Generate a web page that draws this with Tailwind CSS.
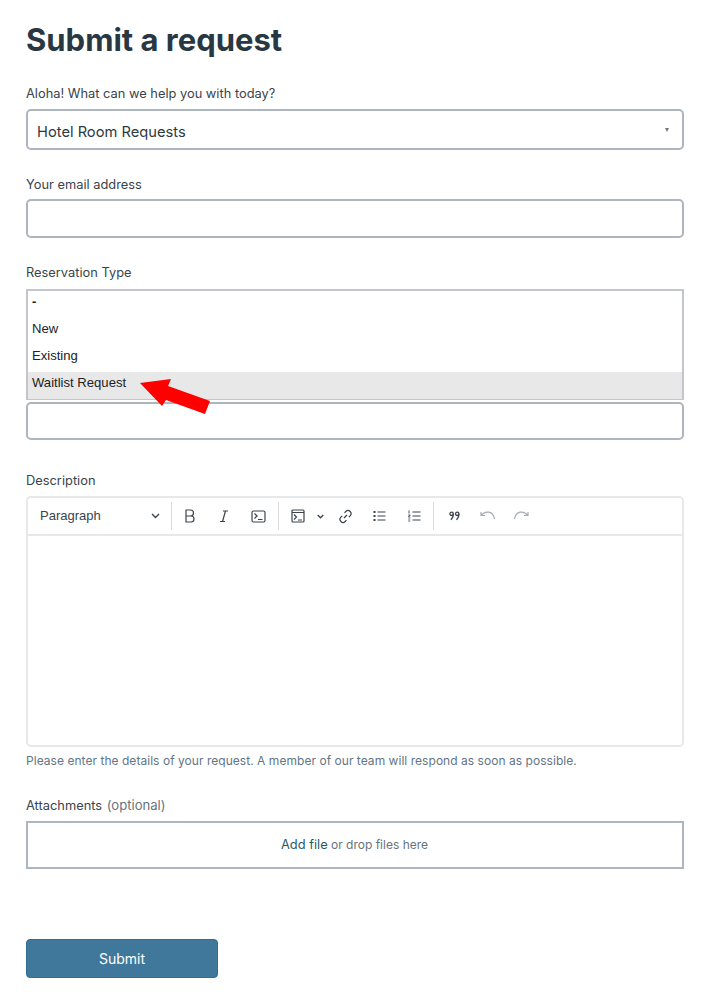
<!DOCTYPE html>
<html lang="en">
<head>
    <meta charset="UTF-8">
    <meta name="viewport" content="width=device-width, initial-scale=1.0">
    <title>Submit a request</title>
    <script src="https://cdn.jsdelivr.net/npm/@tailwindcss/browser@4"></script>
</head>
<body class="bg-white font-['Inter',sans-serif] text-[#2f3941]">
    <main class="relative w-[720px] h-[1002px] overflow-hidden pl-[26px] pr-[36px] pt-[21px]">
        <h1 class="h-[38px] text-[31px] leading-[38px] font-bold text-[#293742]">Submit a request</h1>

        <!-- Help topic -->
        <label class="block mt-[26px] h-[16px] text-[12.85px] leading-[18px] text-[#39434c]">Aloha! What can we help you with today?</label>
        <div class="mt-[8px] h-[41px] flex items-center justify-between pl-[9px] pr-[13px] bg-white border-2 border-[#adb5be] rounded-[5px]">
            <span class="pt-[5px] text-[14.7px] text-[#2f3941]">Hotel Room Requests</span>
            <span class="w-0 h-0 border-x-[2.5px] border-x-transparent border-t-[4px] border-t-[#777]"></span>
        </div>

        <label class="block mt-[26px] h-[16px] text-[12.85px] leading-[18px] text-[#39434c]">Your email address</label>
        <div class="mt-[7px] h-[39px] bg-white border-2 border-[#adb5be] rounded-[5px]"></div>

        <!-- Reservation type, list open -->
        <label class="block mt-[26px] h-[16px] text-[12.85px] leading-[18px] text-[#39434c]">Reservation Type</label>
        <ul class="mt-[9px] h-[111px] border-2 border-[#c2c5c9] font-['Liberation_Sans',sans-serif] text-[13.1px] text-[#222] bg-white">
            <li class="h-[27px] leading-[21px] pl-[4px] font-bold">-</li>
            <li class="h-[27px] leading-[21px] pl-[4px]">New</li>
            <li class="h-[27px] leading-[21px] pl-[4px]">Existing</li>
            <li class="h-[27px] leading-[21px] pl-[4px] bg-[#e8e8e8]">Waitlist Request</li>
        </ul>
        <div class="mt-[2px] h-[38px] bg-white border-2 border-[#adb5be] rounded-[5px]"></div>

        <!-- Description -->
        <label class="block mt-[32px] h-[16px] text-[12.85px] leading-[18px] text-[#39434c]">Description</label>
        <div class="mt-[8px] h-[251px] border-2 border-[#e6e8ea] rounded-[5px] bg-white">
            <div class="h-[38px] flex items-center border-b-2 border-[#e6e8ea] text-[#3a444d]">
                <div class="w-[144px] h-[28px] flex items-center justify-between pl-[12px] pr-[11px] border-r border-[#d9dcdf]">
                    <span class="font-['Liberation_Sans',sans-serif] text-[13px]">Paragraph</span>
                    <svg width="9" height="6" viewBox="0 0 9 6" fill="none" stroke="#3a444d" stroke-width="1.4"><path d="M1 1l3.500 3.500L8 1"/></svg>
                </div>
                <div class="w-[107px] h-[28px] flex items-center pl-[11px] gap-[21px] border-r border-[#d9dcdf]">
                    <svg width="14" height="16" viewBox="0 0 14 16" fill="none" stroke="#3a444d" stroke-width="1.2"><path d="M3 2h4.500a3 3 0 0 1 0 6H3zM3 8h5a3 3 0 0 1 0 6H3z"/></svg>
                    <svg width="12" height="16" viewBox="0 0 12 16" fill="none" stroke="#3a444d" stroke-width="1.2"><path d="M5 3h5M2 13.500h5M7.500 3l-3 10.500"/></svg>
                    <svg width="15" height="13" viewBox="0 0 15 13" fill="none" stroke="#3a444d" stroke-width="1.200"><rect x="1" y="1" width="13" height="11" rx="1.500"/><path d="M3.500 3.500l2.500 2.500-2.500 2.500M7 9.500h4.500"/></svg>
                </div>
                <div class="w-[155px] h-[28px] flex items-center pl-[12px] border-r border-[#d9dcdf]">
                    <svg width="14" height="14" viewBox="0 0 14 14" fill="none" stroke="#3a444d" stroke-width="1.200"><rect x="1" y="1" width="12" height="12" rx="1"/><path d="M1 3.500h12M3 5.500l2.500 2.500L3 10.500M7 11h4"/></svg>
                    <svg class="ml-[12px]" width="7" height="5" viewBox="0 0 7 5" fill="none" stroke="#3a444d" stroke-width="1.300"><path d="M.7 1l2.800 2.800L6.300 1"/></svg>
                    <svg class="ml-[14px]" width="15" height="15" viewBox="0 0 15 15" fill="none" stroke="#3a444d" stroke-width="1.200"><path d="M6 9l3-3M6.500 3.800l1.300-1.300a3 3 0 0 1 4.300 4.300l-1.300 1.300M8.500 11.200l-1.300 1.300a3 3 0 0 1-4.300-4.300l1.300-1.300"/></svg>
                    <svg class="ml-[20px]" width="13" height="12" viewBox="0 0 13 12" fill="none" stroke="#3a444d" stroke-width="1.200"><path d="M4.500 2h8M4.500 6h8M4.500 10h8"/><path d="M.5 2h2M.5 6h2M.5 10h2" stroke-width="2"/></svg>
                    <svg class="ml-[22px]" width="13" height="12" viewBox="0 0 13 12" fill="none" stroke="#3a444d" stroke-width="1.200"><path d="M4.500 2h8M4.500 6h8M4.500 10h8"/><path d="M1 .5v3M.3 5h2l-2 2h2M.3 9h2M.3 11h2" stroke-width=".9"/></svg>
                </div>
                <div class="flex items-center pl-[15px]">
                    <svg width="11" height="10" viewBox="0 0 11 10" fill="none" stroke="#3a444d" stroke-width="1.300"><circle cx="2.600" cy="2.800" r="1.700"/><circle cx="8.200" cy="2.800" r="1.700"/><path d="M4.300 2.800c0 2.800-.9 4.800-2.500 6M9.900 2.800c0 2.800-.9 4.800-2.500 6"/></svg>
                    <svg class="ml-[20px]" width="16" height="10" viewBox="0 0 16 10" fill="none" stroke="#a6acb2" stroke-width="1.200"><path d="M1 1v3.500h4M1.200 4.500C3 2 6 .6 9 1.200c2.800.5 4.800 3 5.500 6.800"/></svg>
                    <svg class="ml-[17px]" width="16" height="10" viewBox="0 0 16 10" fill="none" stroke="#a6acb2" stroke-width="1.200"><path d="M15 1v3.500h-4M14.800 4.500C13 2 10 .6 7 1.200 4.200 1.700 2.200 4.200 1.500 8"/></svg>
                </div>
            </div>
        </div>
        <p class="mt-[7px] h-[14px] text-[12px] leading-[14px] tracking-[0.04px] text-[#627587]">Please enter the details of your request. A member of our team will respond as soon as possible.</p>

        <!-- Attachments -->
        <label class="block mt-[29px] h-[16px] text-[12.85px] leading-[16px] text-[#39434c]">Attachments <span class="ml-px text-[13.1px] text-[#68737d]">(optional)</span></label>
        <div class="mt-[8px] h-[48px] flex items-center justify-center border-2 border-[#adb5be] text-[12px] text-[#68737d]">
            <span class="-ml-[1px]"><span class="text-[12.85px] text-[#1f5c66]">Add file</span> or drop files here</span>
        </div>

        <button class="block mt-[70px] w-[192px] h-[39px] bg-[#40789b] border border-[#2f6d92] rounded-[4px] text-[14px] text-white">Submit</button>

        <!-- Annotation arrow -->
        <svg class="absolute left-[136px] top-[375px]" width="80" height="44" viewBox="136 375 80 44"><polygon points="140,383 171,379 168,386 210,401 205,414 166,400 162,406" fill="#fe0000"/></svg>
    </main>
</body>
</html>
